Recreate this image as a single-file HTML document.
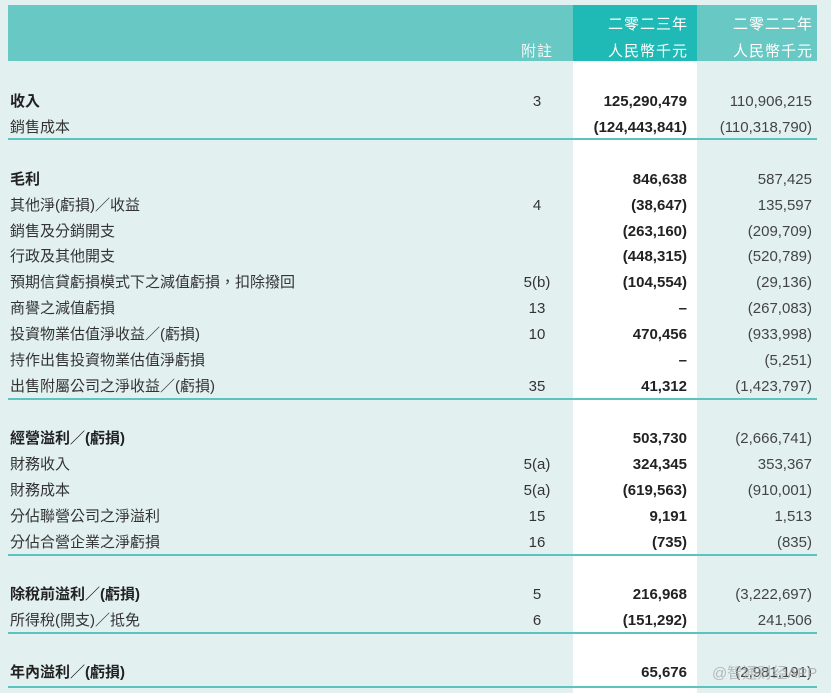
<!DOCTYPE html>
<html><head><meta charset="utf-8"><style>
body{margin:0;width:831px;height:693px;background:#e2f1f0;position:relative;overflow:hidden;font-family:"Liberation Sans","Noto Sans CJK TC",sans-serif;color:#333;}
.hdr{position:absolute;left:8px;top:5px;width:809px;height:56px;background:#68c8c3;}
.c23h{position:absolute;left:573px;top:5px;width:124px;height:56px;background:#1fbab5;}
.c23{position:absolute;left:573px;top:61px;width:124px;height:632px;background:#fff;}
.h{position:absolute;color:#fff;font-size:15px;letter-spacing:1px}
.r{position:absolute;left:0;width:831px;height:22px;font-size:15px;}
.r span{position:absolute;top:0;line-height:22px;white-space:nowrap;}
.l{left:10px}
.n{left:500px;width:74px;text-align:center}
.a{right:144px;font-weight:bold;color:#222}
.b{right:19px;color:#444}
.bd .l{font-weight:bold;color:#222}
.ln{position:absolute;left:8px;width:809px;height:2px;background:#5cc3be;}
.wm{position:absolute;left:712px;top:662px;font-size:15px;color:rgba(170,170,170,.8);}
</style></head><body>
<div class="hdr"></div><div class="c23h"></div><div class="c23"></div>
<div class="h" style="left:521px;top:40px;color:#f4fbfa">附註</div>
<div class="h" style="right:143px;top:13px">二零二三年</div>
<div class="h" style="right:143px;top:40px">人民幣千元</div>
<div class="h" style="right:18px;top:13px">二零二二年</div>
<div class="h" style="right:18px;top:40px">人民幣千元</div>

<div class="r bd" style="top:91px"><span class="l">收入</span><span class="n">3</span><span class="a">125,290,479</span><span class="b">110,906,215</span></div>
<div class="r" style="top:117px"><span class="l">銷售成本</span><span class="a">(124,443,841)</span><span class="b">(110,318,790)</span></div>
<div class="ln" style="top:138px"></div>

<div class="r bd" style="top:169px"><span class="l">毛利</span><span class="a">846,638</span><span class="b">587,425</span></div>
<div class="r" style="top:195px"><span class="l">其他淨(虧損)／收益</span><span class="n">4</span><span class="a">(38,647)</span><span class="b">135,597</span></div>
<div class="r" style="top:221px"><span class="l">銷售及分銷開支</span><span class="a">(263,160)</span><span class="b">(209,709)</span></div>
<div class="r" style="top:246px"><span class="l">行政及其他開支</span><span class="a">(448,315)</span><span class="b">(520,789)</span></div>
<div class="r" style="top:272px"><span class="l">預期信貸虧損模式下之減值虧損，扣除撥回</span><span class="n">5(b)</span><span class="a">(104,554)</span><span class="b">(29,136)</span></div>
<div class="r" style="top:298px"><span class="l">商譽之減值虧損</span><span class="n">13</span><span class="a">–</span><span class="b">(267,083)</span></div>
<div class="r" style="top:324px"><span class="l">投資物業估值淨收益／(虧損)</span><span class="n">10</span><span class="a">470,456</span><span class="b">(933,998)</span></div>
<div class="r" style="top:350px"><span class="l">持作出售投資物業估值淨虧損</span><span class="a">–</span><span class="b">(5,251)</span></div>
<div class="r" style="top:376px"><span class="l">出售附屬公司之淨收益／(虧損)</span><span class="n">35</span><span class="a">41,312</span><span class="b">(1,423,797)</span></div>
<div class="ln" style="top:398px"></div>

<div class="r bd" style="top:428px"><span class="l">經營溢利／(虧損)</span><span class="a">503,730</span><span class="b">(2,666,741)</span></div>
<div class="r" style="top:454px"><span class="l">財務收入</span><span class="n">5(a)</span><span class="a">324,345</span><span class="b">353,367</span></div>
<div class="r" style="top:480px"><span class="l">財務成本</span><span class="n">5(a)</span><span class="a">(619,563)</span><span class="b">(910,001)</span></div>
<div class="r" style="top:506px"><span class="l">分佔聯營公司之淨溢利</span><span class="n">15</span><span class="a">9,191</span><span class="b">1,513</span></div>
<div class="r" style="top:532px"><span class="l">分佔合營企業之淨虧損</span><span class="n">16</span><span class="a">(735)</span><span class="b">(835)</span></div>
<div class="ln" style="top:554px"></div>

<div class="r bd" style="top:584px"><span class="l">除稅前溢利／(虧損)</span><span class="n">5</span><span class="a">216,968</span><span class="b">(3,222,697)</span></div>
<div class="r" style="top:610px"><span class="l">所得稅(開支)／抵免</span><span class="n">6</span><span class="a">(151,292)</span><span class="b">241,506</span></div>
<div class="ln" style="top:632px"></div>

<div class="r bd" style="top:662px"><span class="l">年內溢利／(虧損)</span><span class="a">65,676</span><span class="b">(2,981,191)</span></div>
<div class="ln" style="top:686px"></div>
<div class="wm">@智通财经APP</div>
</body></html>
